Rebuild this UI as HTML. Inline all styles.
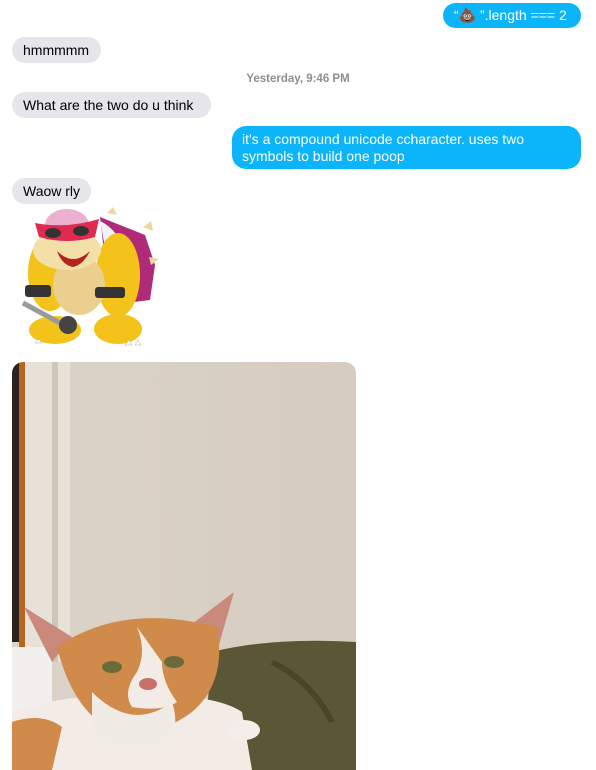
<!DOCTYPE html>
<html><head><meta charset="utf-8"><style>
body{margin:0;width:596px;height:770px;background:#fff;position:relative;overflow:hidden;font-family:"Liberation Sans",sans-serif;font-size:14px;}
.b{position:absolute;border-radius:13px;padding:0 11px;line-height:26px;box-sizing:border-box;white-space:nowrap}
.g{background:#e5e5ea;color:#000}
.bl{background:#0cb4fa;color:#fff}
.ts{position:absolute;top:73px;left:0;width:596px;text-align:center;color:#8e8e93;font-size:11.5px;font-weight:bold}
</style></head><body>
<div class="b bl" style="left:443px;top:3px;width:138px;height:25px;line-height:25px;padding:0 0 0 11px">“💩 ”.length === 2</div>
<div class="b g" style="left:12px;top:37px;width:89px;height:26px">hmmmmm</div>
<div class="ts">Yesterday, 9:46 PM</div>
<div class="b g" style="left:12px;top:92px;width:199px;height:26px">What are the two do u think</div>
<div class="b bl" style="left:232px;top:126px;width:349px;height:43px;line-height:17px;padding:5px 8px 0 10px;border-radius:14px;white-space:normal"><span style="display:block;width:300px">it's a compound unicode ccharacter. uses two symbols to build one poop</span></div>
<div class="b g" style="left:12px;top:178px;width:79px;height:26px">Waow rly</div>
<svg style="position:absolute;left:15px;top:205px" width="150" height="148" viewBox="0 0 150 148">
<path d="M85 12 L130 30 L140 60 L135 95 L95 100Z" fill="#b02a7a"/>
<path d="M85 16 Q115 30 118 90 L100 95Z" fill="#f2f2f2"/>
<path d="M92 8 l6 -6 l4 8Z M128 22 l8 -6 l2 10Z M134 52 l10 2 l-8 6Z" fill="#e8d9a0"/>
<ellipse cx="35" cy="68" rx="22" ry="38" fill="#f3c21b"/>
<ellipse cx="103" cy="70" rx="22" ry="42" fill="#f3c21b"/>
<ellipse cx="40" cy="125" rx="26" ry="14" fill="#f3c21b"/>
<ellipse cx="103" cy="124" rx="24" ry="15" fill="#f3c21b"/>
<ellipse cx="64" cy="80" rx="26" ry="30" fill="#eacf8e"/>
<ellipse cx="52" cy="45" rx="34" ry="20" fill="#f3e0a8"/>
<path d="M42 46 Q58 62 75 46 Q68 60 58 62 Q47 60 42 46Z" fill="#b5231f"/>
<ellipse cx="52" cy="20" rx="22" ry="16" fill="#eeb0d0"/>
<path d="M20 18 Q52 24 84 14 L80 32 Q52 40 24 32Z" fill="#e02a50"/>
<ellipse cx="38" cy="28" rx="8" ry="5" fill="#333"/>
<ellipse cx="66" cy="26" rx="8" ry="5" fill="#333"/>
<rect x="10" y="80" width="26" height="12" rx="3" fill="#333"/>
<rect x="80" y="82" width="30" height="11" rx="3" fill="#333"/>
<path d="M8 98 L45 118" stroke="#999" stroke-width="5"/>
<ellipse cx="53" cy="120" rx="9" ry="9" fill="#444"/>
<path d="M20 138 l4 -4 l3 4Z M110 140 l4 -5 l3 5Z M120 140 l3 -5 l3 5Z" fill="#fff" stroke="#aaa" stroke-width=".5"/>
</svg>
<svg style="position:absolute;left:12px;top:362px;border-radius:11px 11px 0 0" width="344" height="408" viewBox="0 0 344 408">
<defs><clipPath id="c"><rect width="344" height="420" rx="11"/></clipPath>
<linearGradient id="w" x1="0" x2="1"><stop offset="0" stop-color="#dcd4c9"/><stop offset="1" stop-color="#d6ccbf"/></linearGradient></defs>
<g clip-path="url(#c)">
<rect width="344" height="408" fill="url(#w)"/>
<rect x="0" y="0" width="8" height="280" fill="#2a2420"/>
<rect x="7" y="0" width="6" height="285" fill="#b8651e"/>
<rect x="13" y="0" width="45" height="300" fill="#e7e1d8"/>
<rect x="40" y="0" width="6" height="300" fill="#cfc6ba"/>
<rect x="0" y="285" width="40" height="80" fill="#f1f0ee"/>
<path d="M200 290 Q260 275 344 280 L344 408 L190 408 Z" fill="#5b5636"/>
<path d="M260 300 Q300 320 320 360" stroke="#4a4529" stroke-width="6" fill="none"/>
<path d="M0 350 Q60 330 120 335 Q200 330 230 350 L240 408 L0 408Z" fill="#f3ece6"/>
<path d="M0 360 Q30 350 50 365 L40 408 L0 408Z" fill="#d08a4a"/>
<path d="M12 245 L60 275 L40 300Z" fill="#c98a7c"/>
<path d="M222 230 L180 262 L205 290Z" fill="#c98a7c"/>
<path d="M45 285 Q110 240 205 265 Q215 320 180 350 Q140 380 95 365 Q60 345 45 285Z" fill="#d08a4a"/>
<path d="M125 265 Q135 290 125 310 Q110 330 120 345 Q150 350 165 340 Q150 320 150 300Z" fill="#f3ece6"/>
<path d="M80 330 Q120 370 160 340 Q170 370 150 385 Q110 395 80 370Z" fill="#f1ebe6"/>
<ellipse cx="100" cy="305" rx="10" ry="6" fill="#6b6a3a"/>
<ellipse cx="162" cy="300" rx="10" ry="6" fill="#6b6a3a"/>
<ellipse cx="136" cy="322" rx="9" ry="6" fill="#c7706a"/>
<ellipse cx="232" cy="368" rx="16" ry="10" fill="#f4eeea"/>
</g></svg>
</body></html>
